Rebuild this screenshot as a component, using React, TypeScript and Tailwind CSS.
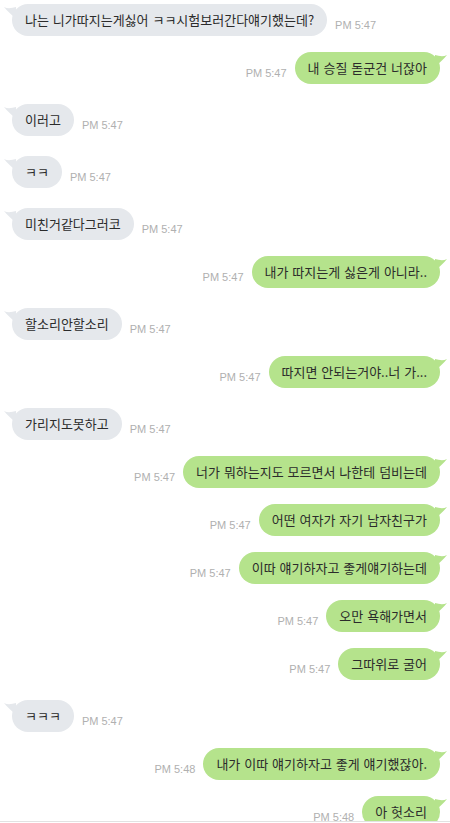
const messages: { text: string; time: string; mine: boolean }[] = [
  { text: '나는 니가따지는게싫어 ㅋㅋ시험보러간다얘기했는데?', time: 'PM 5:47', mine: false },
  { text: '내 승질 돋군건 너잖아', time: 'PM 5:47', mine: true },
  { text: '이러고', time: 'PM 5:47', mine: false },
  { text: 'ㅋㅋ', time: 'PM 5:47', mine: false },
  { text: '미친거같다그러코', time: 'PM 5:47', mine: false },
  { text: '내가 따지는게 싫은게 아니라..', time: 'PM 5:47', mine: true },
  { text: '할소리안할소리', time: 'PM 5:47', mine: false },
  { text: '따지면 안되는거야..너 가...', time: 'PM 5:47', mine: true },
  { text: '가리지도못하고', time: 'PM 5:47', mine: false },
  { text: '너가 뭐하는지도 모르면서 나한테 덤비는데', time: 'PM 5:47', mine: true },
  { text: '어떤 여자가 자기 남자친구가', time: 'PM 5:47', mine: true },
  { text: '이따 얘기하자고 좋게얘기하는데', time: 'PM 5:47', mine: true },
  { text: '오만 욕해가면서', time: 'PM 5:47', mine: true },
  { text: '그따위로 굴어', time: 'PM 5:47', mine: true },
  { text: 'ㅋㅋㅋ', time: 'PM 5:47', mine: false },
  { text: '내가 이따 얘기하자고 좋게 얘기했잖아.', time: 'PM 5:48', mine: true },
  { text: '아 헛소리', time: 'PM 5:48', mine: true },
]

function Tail({ mine }: { mine: boolean }) {
  if (mine) {
    return (
      <svg width="12" height="14" viewBox="0 0 12 14"
        className="absolute -right-[7px] top-[2px] fill-[#b5e38c]">
        <path d="M12 1 C8 3 4 2 0 1 L0 13 C4 9 9 5 12 1 Z" />
      </svg>
    )
  }
  return (
    <svg width="12" height="14" viewBox="0 0 12 14"
      className="absolute -left-[8px] top-[2px] fill-[#e5e8ec]">
      <path d="M0 1 C4 3 8 2 12 1 L12 13 C8 9 3 5 0 1 Z" />
    </svg>
  )
}

function Time({ time }: { time: string }) {
  return (
    <span className="pb-[4px] text-[11px] leading-[13px] text-[#b0b0b0] font-['Liberation_Sans',Arial,sans-serif] whitespace-nowrap">
      {time}
    </span>
  )
}

export default function App() {
  return (
    <div className="h-[823px] w-[450px] overflow-hidden bg-white font-['Noto_Sans_CJK_KR','Noto_Sans',sans-serif]">
      <div className="h-[822px] overflow-hidden border-b border-[#e2e2e2] flex flex-col gap-4">
        {messages.map((m, i) => (
          <div key={i}
            className={m.mine
              ? 'flex items-end justify-end gap-2 pr-[10px]'
              : 'flex items-end justify-start gap-2 pl-[12px] pt-[4px]'}>
            {m.mine && <Time time={m.time} />}
            <div className={m.mine
              ? 'relative rounded-2xl bg-[#b5e38c] px-[13px] py-[8px] text-[13px] leading-[16px] [word-spacing:1px] text-[#2b2b2b] whitespace-nowrap'
              : 'relative rounded-2xl bg-[#e5e8ec] px-[13px] py-[8px] text-[13px] leading-[16px] [word-spacing:1px] text-[#2b2b2b] whitespace-nowrap'}>
              <Tail mine={m.mine} />
              {m.text}
            </div>
            {!m.mine && <Time time={m.time} />}
          </div>
        ))}
      </div>
    </div>
  )
}
